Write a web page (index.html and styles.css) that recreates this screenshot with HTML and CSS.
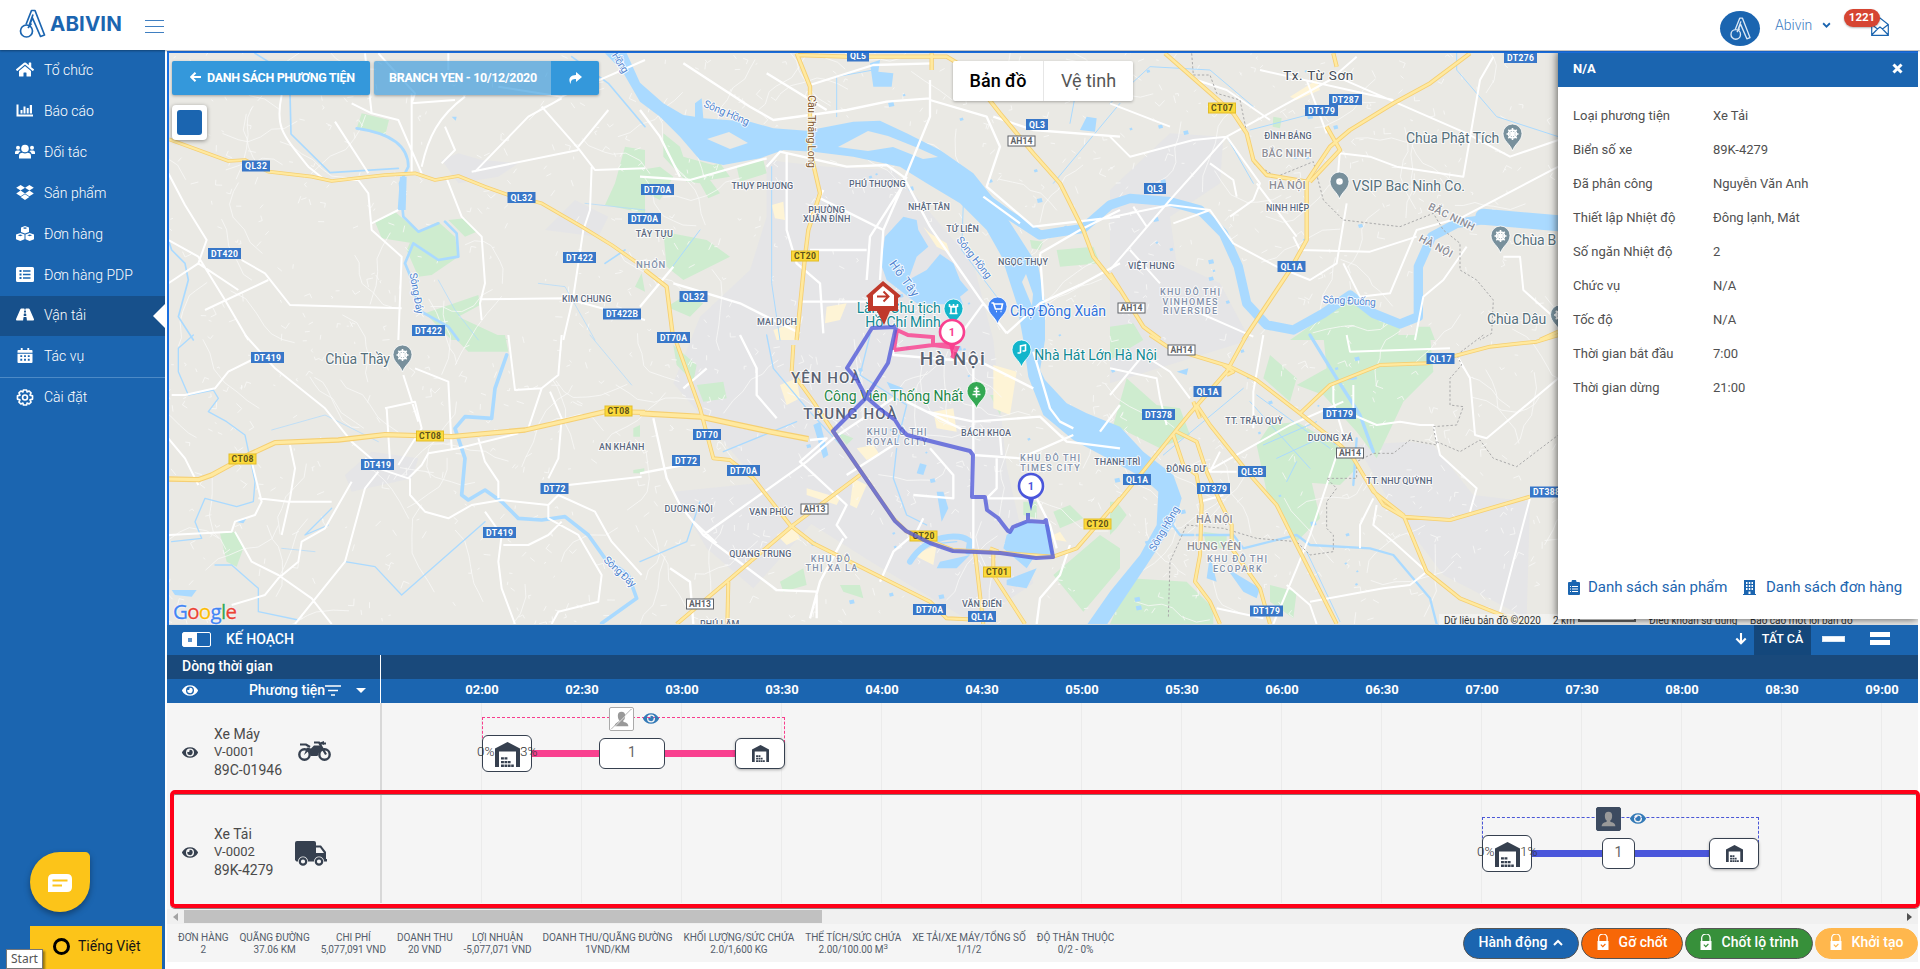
FILE: index.html
```html
<!DOCTYPE html>
<html lang="vi">
<head>
<meta charset="utf-8">
<title>Abivin - Vận tải</title>
<link rel="stylesheet" href="styles.css">
</head>
<body>
<svg class="defs" aria-hidden="true">
  <symbol id="eye" viewBox="0 64 576 384"><path d="M572.52 241.4C518.29 135.59 410.93 64 288 64S57.68 135.64 3.48 241.41a32.35 32.35 0 0 0 0 29.19C57.71 376.41 165.07 448 288 448s230.32-71.64 284.52-177.41a32.35 32.35 0 0 0 0-29.19zM288 400a144 144 0 1 1 144-144 143.93 143.93 0 0 1-144 144zm0-240a95.31 95.31 0 0 0-25.31 3.79 47.85 47.85 0 0 1-66.9 66.9A95.78 95.78 0 1 0 288 160z"/></symbol>
  <symbol id="warehouse" viewBox="0 0 25 25"><path d="M0 6.500 12.500 0 25 6.500V25h-4V9.500H4V25H0z"/><path d="M6 15.200h2.900v2.300H6zM9.500 15.200h2.900v2.300H9.500zM6 18.900h2.900v2.300H6zM9.500 18.900h2.900v2.300H9.500zM13 18.900h2.600v2.300H13zM6 22.500h2.900V25H6zM9.500 22.500h2.900V25H9.500zM13 22.500h2.600V25H13zM16.200 22.500h2.600V25h-2.600z"/></symbol>
  <symbol id="lock" viewBox="0 0 12 16"><path d="M1.700 7.500V4.700a4.200 4.200 0 0 1 8.400-1V7" fill="none" stroke="currentColor" stroke-width="1.300"/><path fill="currentColor" fill-rule="evenodd" d="M.5 7h11v9H.500zM3.400 11l2.400 2.400 3-3-.8-.8-2.200 2.200-1.600-1.600z"/></symbol>
  <symbol id="logo" viewBox="0 0 26 29"><g fill="none" stroke="currentColor" stroke-width="1.700" stroke-linejoin="round"><circle cx="7" cy="22" r="6"/><path d="M6.500 15.500 12 1.500h3.500L25 26l-4 1.500L13 9 9.500 17M13.500 5.500l-3.500 10M12 14.500 8.500 19"/></g></symbol>
</svg>

<header class="topbar">
  <div class="brand"><svg class="brand-mark"><use href="#logo"/></svg><span>ABIVIN</span></div>
  <div class="burger"><i></i><i></i><i></i></div>
  <div class="account">
    <span class="avatar"><svg width="23" height="23"><use href="#logo"/></svg></span>
    <span class="user">Abivin</span>
    <svg class="chev" viewBox="0 0 8 6"><path d="M1 1l3 3 3-3" fill="none" stroke="#1b65b0" stroke-width="1.600"/></svg>
    <span class="mail"><svg width="18" height="19" viewBox="0 0 18 19"><path d="M.7 7.500 9 1l8.300 6.500V18.300H.7zM.7 7.500 6.500 12 9 10l2.500 2 5.800-4.500M6.500 12 .7 18M11.500 12l5.800 6" fill="none" stroke="#1b65b0" stroke-width="1.200"/></svg><b>1221</b></span>
  </div>
</header>

<div class="shell">
<nav class="side">
  <a><svg viewBox="0 32 576 448"><path d="M280.37 148.26L96 300.11V464a16 16 0 0 0 16 16l112.06-.29a16 16 0 0 0 15.92-16V368a16 16 0 0 1 16-16h64a16 16 0 0 1 16 16v95.64a16 16 0 0 0 16 16.05L464 480a16 16 0 0 0 16-16V300L295.67 148.26a12.19 12.19 0 0 0-15.3 0zM571.6 251.47L488 182.56V44.05a12 12 0 0 0-12-12h-56a12 12 0 0 0-12 12v72.61L318.47 43a48 48 0 0 0-61 0L4.34 251.47a12 12 0 0 0-1.6 16.9l25.5 31A12 12 0 0 0 45.15 301l235.22-193.74a12.19 12.19 0 0 1 15.3 0L530.9 301a12 12 0 0 0 16.9-1.6l25.5-31a12 12 0 0 0-1.7-16.93z"/></svg>Tổ chức</a>
  <a><svg viewBox="0 0 18 14"><path d="M.5 1h2v10H17v2H.5zM4.500 6.500h2V10h-2zM7.500 3h2v7h-2zM10.700 4.500h2V10h-2zM13.800 1.500h2.200V10h-2.200z"/></svg>Báo cáo</a>
  <a><svg viewBox="0 0 20 14" class="wide"><circle cx="10" cy="4" r="3.800"/><circle cx="3" cy="3.200" r="2"/><circle cx="17" cy="3.200" r="2"/><path d="M4 14v-2.500C4 9.500 5.500 8.300 7.500 8.300c1.500.8 3.500.8 5 0 2 0 3.500 1.200 3.500 3.200V14zM0 9.500V8c0-1.200.8-2 2-2h2c.8 0 1.300.3 1.700.8C4.300 7.500 3.500 8.400 3.300 9.500zM20 9.500V8c0-1.200-.8-2-2-2h-2c-.8 0-1.300.3-1.700.8 1.400.7 2.200 1.600 2.400 2.700z"/></svg>Đối tác</a>
  <a><svg viewBox="0 0 528 450"><path d="M264.400 84.300l-132 84.300 132 84.300-132 84.300L0 252.100l132.300-84.300L0 84.300 132.300 0l132.100 84.300zM131.600 363.700l132-84.300 132 84.300-132 84.300-132-84.300zm132.800-111.600l132-84.300-132-83.600L395.700 0 528 84.300l-132.300 84.300L528 252.800l-132.300 84.300-131.300-85z"/></svg>Sản phẩm</a>
  <a><svg viewBox="0 0 18 15"><path fill-rule="evenodd" d="M9 0l4 1.500V6L9 7.600 5 6V1.500zM9 1.300 6.800 2.100 9 3l2.200-.9zM4.300 7l4.200 1.600v4.600L4.300 15 0 13.200V8.600zM4.300 8.400 1.900 9.300l2.400.9 2.400-.9zM13.700 7 18 8.600v4.600L13.700 15l-4.200-1.800V8.600zM13.700 8.400l-2.400.9 2.400.9 2.400-.9z"/></svg>Đơn hàng</a>
  <a><svg viewBox="0 0 18 15"><path fill-rule="evenodd" d="M1.500 0h15Q18 0 18 1.500v12Q18 15 16.500 15h-15Q0 15 0 13.500v-12Q0 0 1.500 0zM3.500 3v2h2V3zM7 3.300v1.400h7.500V3.300zM3.500 6.500v2h2v-2zM7 6.800v1.400h7.500V6.800zM3.500 10v2h2v-2zM7 10.300v1.400h7.500v-1.400z"/></svg>Đơn hàng PDP</a>
  <a class="on"><svg viewBox="0 64 576 384"><path d="M573.19 402.67l-139.79-320C428.43 71.29 417.6 64 405.68 64h-97.59l2.45 23.16c.5 4.72-3.21 8.84-7.96 8.84h-29.16c-4.75 0-8.46-4.12-7.96-8.84L267.91 64h-97.59c-11.93 0-22.76 7.29-27.73 18.67L2.8 402.67C-6.45 423.86 8.31 448 30.54 448h196.84l10.31-97.68c.86-8.14 7.72-14.32 15.91-14.32h68.8c8.19 0 15.05 6.18 15.91 14.32L348.62 448h196.84c22.23 0 36.99-24.14 27.73-45.33zM260.4 135.16a8 8 0 0 1 7.96-7.16h39.29c4.09 0 7.53 3.09 7.96 7.16l4.6 43.58c.75 7.09-4.81 13.26-11.93 13.26h-40.54c-7.13 0-12.68-6.17-11.93-13.26l4.59-43.58zM315.64 304h-55.29c-9.5 0-16.91-8.23-15.91-17.68l5.07-48c.86-8.14 7.72-14.32 15.91-14.32h45.15c8.19 0 15.05 6.18 15.91 14.32l5.07 48c1 9.45-6.41 17.68-15.91 17.68z"/></svg>Vận tải</a>
  <a><svg viewBox="0 0 16 16"><path fill-rule="evenodd" d="M3.500 0h2v2h5V0h2v2H15q1 0 1 1v2H0V3q0-1 1-1h2.500zM0 6h16v9q0 1-1 1H1q-1 0-1-1zM3 7.700v2h2v-2zM7 7.700v2h2v-2zM11 7.700v2h2v-2zM3 11.500v2h2v-2zM7 11.500v2h2v-2zM11 11.500v2h2v-2z"/></svg>Tác vụ</a>
  <a class="ruled"><svg viewBox="0 0 18 18"><g fill="none" stroke="#fff" stroke-width="1.700" stroke-linejoin="round"><path d="M7.300 1h3.400l.5 2.200 2.200-1.100 2 2-1.100 2.400L17 7.300v3.400l-2.700.8 1.100 2.400-2 2-2.200-1.100-.5 2.200H7.300l-.5-2.200-2.200 1.100-2-2 1.100-2.400L1 10.700V7.300l2.700-.8-1.100-2.400 2-2 2.200 1.100z"/><circle cx="9" cy="9" r="2.600"/></g></svg>Cài đặt</a>
  <div class="side-foot">
    <div class="chat"><svg width="24" height="18" viewBox="0 0 24 18"><path fill="#fff" d="M5 0h14q5 0 5 5v8q0 5-5 5H0V5q0-5 5-5z"/><path d="M4.500 6.500h15M4.500 11.500h9.500" stroke="#fcc419" stroke-width="2"/></svg></div>
    <div class="lang"><i></i>Tiếng Việt</div>
    <div class="tip">Start</div>
  </div>
</nav>

<main class="main">
  <section class="mapbox">
    <svg id="map" viewBox="169 53 1749 571" preserveAspectRatio="xMinYMin slice"></svg>
    <div class="attrib"><span class="a1">Dữ liệu bản đồ ©2020</span><span class="a2">2 km</span><i></i><span class="a3">Điều khoản sử dụng</span><span class="a4">Báo cáo một lỗi bản đồ</span></div>
    <div class="google"><b>G</b><b>o</b><b>o</b><b>g</b><b>l</b><b>e</b></div>
    <div class="mapbtns">
      <button class="mb"><svg width="11" height="10" viewBox="0 0 11 10"><path d="M5.500.8 1.200 5l4.300 4.200M1.500 5H11" fill="none" stroke="#fff" stroke-width="2"/></svg>DANH SÁCH PHƯƠNG TIỆN</button>
      <div class="pair"><button class="mb dim">BRANCH YEN - 10/12/2020</button><button class="mb share"><svg width="14" height="12" viewBox="0 0 14 12"><path fill="#fff" d="M8 0l6 5-6 5V7C4.500 7 2.500 8 2.800 12 .8 9.500-.2 3.500 8 3z"/></svg></button></div>
    </div>
    <div class="swatch"><i></i></div>
    <div class="types"><span class="sel">Bản đồ</span><span>Vệ tinh</span></div>
    <aside class="info">
      <div class="info-head"><b>N/A</b><svg width="11" height="11" viewBox="0 0 11 11"><path d="M1.500 1.500l8 8M9.500 1.500l-8 8" stroke="#fff" stroke-width="3"/></svg></div>
      <dl>
        <dt>Loại phương tiện</dt><dd>Xe Tải</dd>
        <dt>Biển số xe</dt><dd>89K-4279</dd>
        <dt>Đã phân công</dt><dd>Nguyễn Văn Anh</dd>
        <dt>Thiết lập Nhiệt độ</dt><dd>Đông lạnh, Mát</dd>
        <dt>Số ngăn Nhiệt độ</dt><dd>2</dd>
        <dt>Chức vụ</dt><dd>N/A</dd>
        <dt>Tốc độ</dt><dd>N/A</dd>
        <dt>Thời gian bắt đầu</dt><dd>7:00</dd>
        <dt>Thời gian dừng</dt><dd>21:00</dd>
      </dl>
      <div class="links">
        <a><svg width="12" height="15" viewBox="0 0 12 15"><path fill="#1b65b0" fill-rule="evenodd" d="M1 2h2.500a2.500 2.500 0 0 1 5 0H11q1 0 1 1v11q0 1-1 1H1q-1 0-1-1V3q0-1 1-1zM2 6v1h1V6zM4 6v1h6V6zM2 8.500v1h1v-1zM4 8.500v1h6v-1zM2 11v1h1v-1zM4 11v1h6v-1z"/></svg>Danh sách sản phẩm</a>
        <a><svg width="13" height="15" viewBox="0 0 13 15"><path fill="#1b65b0" fill-rule="evenodd" d="M1 0h11v14h1v1H0v-1h1zM3 2v2h1.500V2zM5.800 2v2h1.500V2zM8.500 2v2H10V2zM3 5v2h1.500V5zM5.800 5v2h1.500V5zM8.500 5v2H10V5zM3 8v2h1.500V8zM5.800 8v2h1.500V8zM8.500 8v2H10V8zM5.500 11.500V14h2v-2.500z"/></svg>Danh sách đơn hàng</a>
      </div>
    </aside>
  </section>

  <section class="plan">
    <div class="plan-head">
      <span class="toggle"><i></i></span><span class="plan-title">KẾ HOẠCH</span>
      <svg class="down" width="12" height="12" viewBox="0 0 12 12"><path d="M6 0v10M1.300 5.500 6 10.200l4.700-4.700" fill="none" stroke="#fff" stroke-width="2.100"/></svg>
      <span class="all">TẤT CẢ</span><i class="one"></i><span class="two"><i></i><i></i></span>
    </div>
    <div class="scale-top"><div class="col">Dòng thời gian</div></div>
    <div class="scale">
      <div class="col"><svg class="ey"><use href="#eye"/></svg><span>Phương tiện</span><svg width="16" height="11" viewBox="0 0 16 11"><path d="M0 1h16M3 5.500h10M6 10h4" stroke="#fff" stroke-width="1.600"/></svg><i class="caret"></i></div>
      <div class="hours"><span>02:00</span><span>02:30</span><span>03:00</span><span>03:30</span><span>04:00</span><span>04:30</span><span>05:00</span><span>05:30</span><span>06:00</span><span>06:30</span><span>07:00</span><span>07:30</span><span>08:00</span><span>08:30</span><span>09:00</span></div>
    </div>
    <div class="rows">
      <div class="row">
        <div class="col"><svg class="ey"><use href="#eye"/></svg><p>Xe Máy<small>V-0001</small>89C-01946</p>
          <svg class="veh moto" width="33" height="20" viewBox="0 0 33 20"><g fill="none" stroke="#36404f"><circle cx="6.500" cy="13.500" r="5.200" stroke-width="2.400"/><circle cx="26.500" cy="13.500" r="5.200" stroke-width="2.400"/><path d="M2 3.500h6l4 2.500M16 1.500h5l7 12M22 2.500h6" stroke-width="2.200"/></g><path fill="#36404f" d="M9 6.500l4 1 3-3h6l3 4-4 3-1.500 3.500H12.500L11 9.500 6 14zM22 1.500l4-1.500v4z"/></svg></div>
        <div class="track">
          <div class="trip pink" style="left:100px;width:303px"></div>
          <div class="bar pinkbar" style="left:150px;width:210px"></div>
          <div class="stop big" style="left:100px;width:50px"><svg width="25" height="25"><use href="#warehouse"/></svg></div>
          <span class="pct" style="left:95px">0%</span><span class="pct" style="left:138px">3%</span>
          <div class="stop" style="left:217px;width:66px">1</div>
          <div class="stop soft" style="left:353px;width:50px"><svg width="17" height="17"><use href="#warehouse"/></svg></div>
          <div class="driver none" style="left:227px"><svg viewBox="0 0 24 24"><path fill="#999" d="M12 4q4 0 4 4.500t-2.500 5.500l1 1.300q5 .7 5 4.700h-15q0-4 5-4.700l1-1.300Q8 13 8 8.500T12 4z"/><path d="M1 23 23 1" stroke="#999"/><path d="M2 23 23 2" stroke="#fff" stroke-width=".8"/></svg></div>
          <svg class="ey see" style="left:261px"><use href="#eye"/></svg>
        </div>
      </div>
      <div class="row">
        <div class="col"><svg class="ey"><use href="#eye"/></svg><p>Xe Tải<small>V-0002</small>89K-4279</p>
          <svg class="veh truck" width="32" height="25" viewBox="0 0 32 25"><path fill="#36404f" fill-rule="evenodd" d="M2 0h17q2 0 2 2v2.500h5l5 6.500V18h1v2.500H1.500L0 19V2Q0 0 2 0zM21 6.500V12h8l-4-5.500z"/><circle cx="8" cy="20.500" r="5" fill="#f5f5f5"/><circle cx="24" cy="20.500" r="5" fill="#f5f5f5"/><circle cx="8" cy="20.500" r="3.200" fill="none" stroke="#36404f" stroke-width="2.200"/><circle cx="24" cy="20.500" r="3.200" fill="none" stroke="#36404f" stroke-width="2.200"/></svg></div>
        <div class="track">
          <div class="trip blue" style="left:1100px;width:277px"></div>
          <div class="bar bluebar" style="left:1150px;width:182px"></div>
          <div class="stop big" style="left:1100px;width:50px"><svg width="25" height="25"><use href="#warehouse"/></svg></div>
          <span class="pct" style="left:1095px">0%</span><span class="pct" style="left:1138px">1%</span>
          <div class="stop" style="left:1220px;width:33px">1</div>
          <div class="stop soft" style="left:1327px;width:50px"><svg width="17" height="17"><use href="#warehouse"/></svg></div>
          <div class="driver has" style="left:1214px"><svg viewBox="0 0 24 24"><path fill="#999" d="M12 4q4 0 4 4.500t-2.500 5.500l1 1.300q5 .7 5 4.700h-15q0-4 5-4.700l1-1.300Q8 13 8 8.500T12 4z"/></svg></div>
          <svg class="ey see" style="left:1248px"><use href="#eye"/></svg>
        </div>
      </div>
      <div class="highlight"></div>
    </div>
    <div class="hscroll"><i class="la"></i><i class="thumb"></i><i class="ra"></i></div>
    <footer class="foot">
      <div class="stats">
        <div>ĐƠN HÀNG<br>2</div><div>QUÃNG ĐƯỜNG<br>37.06 KM</div><div>CHI PHÍ<br>5,077,091 VND</div><div>DOANH THU<br>20 VND</div><div>LỢI NHUẬN<br>-5,077,071 VND</div><div>DOANH THU/QUÃNG ĐƯỜNG<br>1VND/KM</div><div>KHỐI LƯỢNG/SỨC CHỨA<br>2.0/1,600 KG</div><div>THỂ TÍCH/SỨC CHỨA<br>2.00/100.00 M<sup>3</sup></div><div>XE TẢI/XE MÁY/TỔNG SỐ<br>1/1/2</div><div>ĐỘ THÂN THUỘC<br>0/2 - 0%</div>
      </div>
      <div class="acts">
        <button class="c1">Hành động<svg width="10" height="7" viewBox="0 0 10 7"><path d="M1 6l4-4 4 4" fill="none" stroke="#fff" stroke-width="2"/></svg></button>
        <button class="c2"><svg width="12" height="16"><use href="#lock"/></svg>Gỡ chốt</button>
        <button class="c3"><svg width="12" height="16"><use href="#lock"/></svg>Chốt lộ trình</button>
        <button class="c4"><svg width="12" height="16"><use href="#lock"/></svg>Khởi tạo</button>
      </div>
    </footer>
  </section>
</main>
</div>
<script src="map.js"></script>
</body>
</html>
```
FILE: styles.css
```css
*{box-sizing:border-box}
body{margin:0;width:1920px;height:969px;overflow:hidden;background:#fff;font-family:Roboto,"Liberation Sans",sans-serif;color:#444;display:flex;flex-direction:column}
button{font-family:inherit;border:0;margin:0;padding:0}
.defs{position:absolute;width:0;height:0}
svg{display:block;flex:none}

.topbar{height:50px;flex:none;display:flex;align-items:center;background:#fff;position:relative;z-index:5;box-shadow:0 1px 2px rgba(0,0,0,.35);color:#1b65b0}
.brand{display:flex;align-items:center;margin-left:19px;width:104px;gap:4px}
.brand-mark{width:27px;height:29px;margin-top:-3px}
.brand span{font:700 20.500px/24px Inter,sans-serif;letter-spacing:.1px;margin-top:-2px}
.burger{margin-left:22px;display:flex;flex-direction:column;gap:5px;width:19px;margin-top:3px}
.burger i{height:1px;background:#3f7fc1}
.account{margin-left:auto;display:flex;align-items:center;width:200px;height:50px}
.avatar{width:40px;height:35px;border-radius:50%;background:#1b65b0;color:#dbe8f5;display:flex;align-items:center;justify-content:center;margin-top:7px}
.user{font-size:14px;font-weight:300;margin-left:15px;width:47px;color:#3b7bbf}
.chev{width:9px;height:7px}
.mail{position:relative;margin-left:40px;margin-top:3px}
.mail b{position:absolute;left:-27px;top:-8px;width:36px;height:18px;border-radius:9px;background:#d64532;color:#fff;font-size:11.500px;line-height:17px;text-align:center;box-shadow:0 1px 2px rgba(0,0,0,.3)}

.shell{display:flex;flex:1;min-height:0}
.side{width:165px;background:#1b65b0;display:flex;flex-direction:column;position:relative}
.side a{height:41px;display:flex;align-items:center;font-size:14px;font-weight:300;color:#fff;padding:0 0 2px 16px;flex:none}
.side a svg{width:18px;height:15px;margin-right:10px;fill:#fff}
.side a svg.wide{width:20px;margin:0 9px 0 -1px}
.side a.on{height:40px;background:#17508b;position:relative;padding-bottom:3px}
.side a.on:after{content:"";position:absolute;right:0;top:8px;border:12px solid transparent;border-right-color:#fff;border-left:0}
.side a.ruled{border-top:1px solid #4d8ac6}
.side a.ruled svg{height:17px}
.side-foot{margin-top:auto;height:117px;display:flex;flex-direction:column;justify-content:space-between;align-items:flex-start;padding-left:30px;position:relative}
.chat{width:60px;height:60px;border-radius:50% 8% 50% 50%;background:#fcc419;box-shadow:0 3px 6px rgba(0,0,0,.35);display:flex;align-items:center;justify-content:center;padding-top:2px}
.lang{width:132px;height:43px;background:#fcc419;color:#151515;font-size:14px;display:flex;align-items:center;padding-left:23px;padding-bottom:3px;gap:8px}
.lang i{width:17px;height:17px;border:3px solid #000;border-radius:50%}
.tip{position:absolute;left:6px;bottom:0;width:37px;height:20px;background:#fff;border:1px solid #777;font:12px/18px "Noto Sans",sans-serif;color:#555;text-align:center;box-shadow:2px 2px 2px rgba(0,0,0,.4)}

.main{flex:1;margin:1px 2px 0 2px;display:flex;flex-direction:column;min-width:0}
.mapbox{height:574px;flex:none;position:relative;border:2px solid #1a6fe0;border-width:2px 0 0 2px;overflow:hidden;background:#eae9e4;box-shadow:inset 0 -1px #ddd}
#map{width:1749px;height:571px}
.mapbtns{position:absolute;left:3px;top:8px;display:flex;gap:4px}
.mb{height:34px;padding:0 15px 2px 18px;background:#3498db;color:#fff;font-weight:700;font-size:12.500px;letter-spacing:-.36px;display:flex;align-items:center;gap:6px;border-radius:2px;box-shadow:0 1px 3px rgba(0,0,0,.3);width:198px;white-space:nowrap}
.pair{display:flex;box-shadow:0 1px 3px rgba(0,0,0,.3);border-radius:2px}
.mb.dim{width:177px;background:rgba(52,152,219,.65);padding:0 0 2px 15px;letter-spacing:-.3px;box-shadow:none;border-radius:2px 0 0 2px}
.mb.share{width:48px;padding:0;justify-content:center;box-shadow:none;border-radius:0 2px 2px 0}
.swatch{position:absolute;left:3px;top:52px;width:35px;height:35px;background:#fff;border-radius:4px;box-shadow:0 1px 4px rgba(0,0,0,.4);padding:5px}
.swatch i{display:block;height:25px;background:#1b65b0;border-radius:3px}
.types{position:absolute;left:784px;top:8px;display:flex;height:40px;width:180px;background:#fff;box-shadow:0 1px 3px rgba(0,0,0,.3);border-radius:2px;font-size:18px;line-height:39px;color:#565656}
.types span{flex:1;text-align:center}
.types .sel{flex:0 0 91px;color:#000;font-weight:500;font-size:18px;border-right:1px solid #e6e6e6}
.google{position:absolute;left:4px;top:546px;font:500 20.500px/25px "Open Sans",Lato,sans-serif;letter-spacing:-.7px;-webkit-text-stroke:.3px;text-shadow:0 0 2px #fff,0 0 2px #fff;display:flex}
.google b{font-weight:500;color:#4285f4}
.google b:nth-child(2),.google b:nth-child(6){color:#ea4335}
.google b:nth-child(3){color:#fbbc05}
.google b:nth-child(5){color:#34a853}
.attrib{position:absolute;left:1270px;right:0;top:561px;height:14px;background:rgba(245,245,245,.7);font-size:10px;line-height:13px;color:#333;display:flex;white-space:nowrap;padding-left:5px}
.attrib .a1{width:109px}.attrib .a2{width:25px}
.attrib i{width:58px;height:8px;border:2px solid #666;border-top:0;margin-right:13px}
.attrib .a3{width:101px}
.info{position:absolute;left:1389px;top:-2px;width:360px;height:568px;background:#fff;box-shadow:0 0 9px rgba(0,0,0,.7);display:flex;flex-direction:column}
.info-head{height:36px;background:#1b65b0;display:flex;align-items:center;justify-content:space-between;padding:0 15px 1px;color:#fff;font-size:13px}
.info dl{margin:11px 0 0 15px;display:grid;grid-template-columns:140px 1fr;grid-auto-rows:34px;align-items:center;font-size:13px;color:#505050}
.info dd{margin:0}
.links{margin-top:auto;height:48px;display:flex;padding-left:10px;color:#1b65b0;font-size:15px}
.links a{display:flex;align-items:center;height:32px;gap:8px;white-space:nowrap;width:176px;letter-spacing:-.03px}
.links a+a{gap:10px}

.plan{flex:1;display:flex;flex-direction:column;background:#f5f5f5;margin-bottom:7px}
.plan-head{height:30px;background:#1b65b0;color:#fff;display:flex;align-items:center;padding:0 0 2px 15px}
.toggle{width:29px;height:15px;border:1px solid #fff;border-radius:2px;margin-right:15px}
.toggle i{display:block;width:14px;height:13px;background:#fff;position:relative}
.toggle i:after{content:"";position:absolute;left:5px;top:5px;width:4px;height:4px;background:#5d92c9}
.plan-title{font-size:14px;font-weight:500}
.down{margin-left:auto;margin-right:7px}
.all{background:#14477b;width:57px;height:30px;margin-bottom:-2px;font-size:12.500px;font-weight:500;line-height:28px;text-align:center}
.one{width:23px;height:6px;background:#fff;border:1px solid #dbe8f5;margin-left:11px}
.two{margin-left:25px;width:20px;margin-right:28px}
.two i{display:block;height:5px;background:#fff;margin:2px 0 3px}
.col{width:214px;flex:none;display:flex;align-items:center;padding-left:15px}
.scale-top{height:24px;background:#19497b;color:#fff;font-size:14px;font-weight:500;display:flex}
.scale-top .col,.scale .col{border-right:1px solid #fff;padding-bottom:2px}
.scale{height:24px;background:#1b65b0;color:#fff;display:flex;font-size:14px;font-weight:500}
.scale .col span{margin-left:auto}
.ey{width:16px;height:11px;fill:#36404f}
.scale .ey{fill:#fff}
.row .col>.ey{margin-top:-2px}
.caret{border:5px solid transparent;border-top-color:#fff;border-bottom:0;margin:0 14px 0 15px}
.hours{display:flex;margin-left:51px;width:1486px;overflow:hidden;line-height:22px;font-size:13px;font-weight:700}
.hours span{width:100px;text-align:center;flex:none}
.rows{height:200px;position:relative}
.row{height:100px;display:flex;background:#f5f5f5}
.row .col{border-right:2px solid #d8d8d8;width:215px}
.row p{margin:-2px 0 0 16px;width:84px;font-size:14px;line-height:18px;color:#4a4a4a}
.row p small{display:block;font-size:13px}
.moto{margin-top:-5px}
.truck{margin:1px 0 0 -3px}
.track{flex:1;position:relative;overflow:hidden;background:repeating-linear-gradient(90deg,transparent 0 99px,#ebebeb 99px 100px)}
.trip{position:absolute;top:14px;height:26px;border:1px dashed #f83e8c;border-bottom:0}
.trip.blue{border-color:#4a56d6}
.bar{position:absolute;top:47px;height:7px;background:#f9408f}
.bluebar{background:#4a56db}
.stop{position:absolute;top:35px;height:31px;border:1px solid #36404f;border-radius:6px;background:#fff;display:flex;align-items:center;justify-content:center;font-size:14px;color:#666;padding-bottom:4px}
.stop svg{fill:#36404f;color:#36404f;margin-top:3px}
.stop.big{top:32px;height:37px;padding-bottom:2px}
.stop.soft{box-shadow:0 1px 3px rgba(0,0,0,.3)}
.pct{position:absolute;top:40px;font-size:13.500px;font-weight:300;color:#333;line-height:16px}
.driver{position:absolute;top:4px;width:25px;height:24px;border-radius:2px}
.driver svg{width:100%;height:100%}
.driver.none{background:#fff;border:1px solid #aaa}
.driver.has{background:#3d4b60;border:1px solid #3d4b60}
.ey.see{position:absolute;top:10px;fill:#337ab7}
.highlight{position:absolute;left:3px;top:87px;width:1750px;height:118px;border:4px solid #ff0018;border-radius:5px;box-shadow:0 1px 0 #8a7a7a,inset 0 1px 0 #8a7a7a}
.hscroll{height:15px;margin-top:6px;background:#f0f0f0;display:flex;align-items:center;justify-content:space-between}
.thumb{width:638px;height:13px;background:#c1c1c1;margin-right:auto;margin-left:6px}
.la,.ra{border:4px solid transparent}
.la{border-right:5px solid #a3a3a3;border-left:0;margin-left:6px}
.ra{border-left:5px solid #505050;border-right:0;margin-right:6px}
.foot{height:37px;display:flex;justify-content:space-between;align-items:flex-start}
.stats{display:flex;gap:11px;margin:8px 0 0 11px;font-size:10px;letter-spacing:-.045px;line-height:12px;color:#545d6b;text-align:center;white-space:nowrap}
.stats sup{font-size:8px;line-height:0}
.acts{display:flex;gap:2px;margin-top:4px}
.acts button{height:31px;border-radius:16px;color:#fff;font-size:14px;font-weight:500;display:flex;align-items:center;justify-content:center;border:1px solid #555;padding-bottom:3px;white-space:nowrap}
.acts .c1{width:116px;background:#1b65b0;gap:6px}
.acts .c2{width:102px;background:#f76707}
.acts .c3{width:128px;background:#37903a}
.acts .c4{width:103px;background:#ffb74d;border-color:#ffb74d}
.acts .c2,.acts .c3,.acts .c4{gap:10px}

#map .green{fill:#ceeccf}
#map .urban{fill:#e5e5e7}
#map .lake{fill:#aadaff}
#map .river{fill:none;stroke:#aadaff;stroke-linejoin:round;stroke-linecap:round}
#map .street{fill:none;stroke:#fff;stroke-linejoin:round}
#map .casing{fill:none;stroke:#f5cf73;stroke-linejoin:round}
#map .hwy{fill:none;stroke:#ffe99f;stroke-linejoin:round}
#map .border{fill:none;stroke:#aaa;stroke-width:3;stroke-dasharray:7 6}
#map .minor{fill:none;stroke:#f9f9f7;stroke-width:.8}
#map .beige{fill:#fef4d6}
#map text{font-family:Roboto,"Liberation Sans",sans-serif;text-anchor:middle;paint-order:stroke;stroke:#fff;stroke-width:2px;stroke-opacity:.85;stroke-linejoin:round}
#map .t{fill:#5b6980;font-weight:500}
#map .k{fill:#8291aa;font-weight:500}
#map .d{fill:#5a6372;font-weight:500}
#map .p{fill:#8e8f98;font-weight:500}
#map .poi{fill:#56707c}
#map .town{fill:#444b55}
#map .w{fill:#4f83cf}
#map .teal{fill:#128a94}
#map .shop{fill:#3273dc}
#map .park{fill:#1f8746}
#map .br{fill:#80562d}
#map .sh text{stroke:none;font-weight:700}
```
FILE: map.js
```js
(function () {
  var NS = 'http://www.w3.org/2000/svg', map = document.getElementById('map');
  var tiles = { A: [165, 50], B: [640, 50], C: [1110, 50], D: [165, 335], E: [640, 335], F: [1110, 335] };
  function add(tag, attrs, text, parent) {
    var e = document.createElementNS(NS, tag);
    for (var k in attrs) e.setAttribute(k, attrs[k]);
    if (text) e.textContent = text;
    (parent || map).appendChild(e);
    return e;
  }
  function shape(tile, cls, d, w) {
    var o = tiles[tile], a = { d: d, 'class': cls, transform: 'translate(' + o[0] + ' ' + o[1] + ') scale(.33333)' };
    if (w) a['stroke-width'] = w;
    return add('path', a);
  }

  // Built-up areas
  [['B', 'M380 330L560 350 760 360 830 440 1000 640 1060 870 1100 1250 1180 1600 1000 1720 700 1540 400 1350 100 1000 180 800 330 660 380 500z'],
   ['C', 'M0 420L180 250 340 260 330 400 180 500 200 640 330 700 420 870 0 1000z'],
   ['F', 'M740 330L900 320 970 330 1090 480 1260 500 1250 850 1000 720 850 520z'],
   ['A', 'M830 330L880 310 950 330 1060 340 1000 380 880 400zM1140 540L1300 560 1330 500 1230 450z'],
   ['E', 'M100 470L400 440 520 560 340 760 200 640z'], ['D', 'M540 420L620 350 760 370 740 430 560 470z']
  ].forEach(function (s) { shape(s[0], 'urban', s[1]); });

  // Parks and fields
  [['A', 'M590 190L672 210 660 258 575 235zM630 515L690 485 760 545 820 515 870 560 880 620 800 675 760 680 725 600 735 578 650 565zM850 510L900 505 935 545 900 560zM1380 290L1440 300 1440 490 1320 465 1350 400zM1430 670L1440 725 1410 710zM780 790L940 735 945 765 880 800 1030 870 860 870z'],
   ['B', 'M70 250L120 290 130 320 220 345 240 340 270 380 210 390 240 430 205 445 180 400 140 395 70 320zM0 360L60 350 100 380 60 450 0 420zM290 350L370 330 380 370 300 395zM70 545L200 570 270 620 130 690 80 650zM1170 570L1210 575 1200 600 1175 595zM1250 600L1360 590 1380 640 1260 650zM80 770L130 740 190 760 150 800z'],
   ['C', 'M490 200L515 205 510 235 488 230zM540 870L640 800 720 750 790 790 870 835 860 870zM920 830L960 830 975 870 910 870zM0 830L70 820 100 870 0 930z'],
   ['D', 'M860 0L1020 0 1030 50 910 50zM165 595L215 590 235 640 215 695 185 680zM1405 280L1425 270 1425 305 1405 305zM1405 405L1438 400 1438 415 1405 415z'],
   ['E', 'M100 30L170 90 160 140 110 90zM170 150L250 140 260 190 190 200zM590 290L640 310 620 330zM1050 180L1090 180 1080 240zM1240 530L1290 510 1330 550 1260 580zM1150 500L1190 500 1190 550 1150 540zM1240 720L1380 600 1440 640 1440 700 1330 830zM600 750L660 750 670 790 610 770zM420 740L490 700 500 750 430 770z'],
   ['F', 'M50 130L140 210 210 220 240 300 150 340 10 270zM480 60L560 130 540 200 460 130zM640 0L960 0 970 110 880 200 800 370 740 290 640 180 560 150 650 100zM560 260L730 360 740 400 690 450 560 440 460 400 440 330 480 270zM440 330L600 420 630 550 560 620 470 470zM0 500L20 500 50 540 20 580 0 600zM60 730L230 740 310 820 310 867 0 867zM480 750L560 770 550 850 480 800zM280 590L350 600 350 640 290 640z']
  ].forEach(function (s) { shape(s[0], 'green', s[1]); });

  // Public buildings blocks
  shape('B', 'beige', 'M395 465L430 455 435 510 405 505zM850 530L890 590 930 610 920 580 870 550zM560 770L620 760 600 810 555 820zM400 840L460 820 480 870 410 870z');
  shape('E', 'beige', 'M420 150L470 130 480 190 440 210zM1060 90L1130 110 1110 240 1060 220zM500 460L600 490 590 510 500 480zM640 430L680 450 650 520 630 510zM880 230L940 220 950 290 890 280zM820 660L890 630 880 690zM410 600L460 570 480 610 440 630zM650 340L700 330 720 360 680 375zM1220 610L1260 590 1280 620z');
  shape('C', 'beige', 'M540 140L620 90 630 120 560 150z');

  // Seeded scatter of short residential streets
  var seed = 7;
  function rnd() { seed = (seed * 16807) % 2147483647; return seed / 2147483647; }
  var d = '';
  for (var i = 0; i < 1300; i++) {
    var x = 170 + rnd() * 1390, y = 53 + rnd() * 571, a = rnd() * 6.28, l = 2 + rnd() * 6;
    d += 'M' + x.toFixed(1) + ' ' + y.toFixed(1) + 'l' + (Math.cos(a) * l).toFixed(1) + ' ' + (Math.sin(a) * l).toFixed(1);
    if (rnd() > .65) d += 'l' + (-Math.sin(a) * l * .8).toFixed(1) + ' ' + (Math.cos(a) * l * .8).toFixed(1);
  }
  for (i = 0; i < 150; i++) {
    x = 170 + rnd() * 1390; y = 53 + rnd() * 571; a = rnd() * 6.28;
    d += 'M' + x.toFixed(1) + ' ' + y.toFixed(1);
    for (var j = 0; j < 6; j++) { a += (rnd() - .5) * 1.2; l = 8 + rnd() * 10; d += 'l' + (Math.cos(a) * l).toFixed(1) + ' ' + (Math.sin(a) * l).toFixed(1); }
  }
  add('path', { d: d, 'class': 'minor' });

  // Ponds
  d = '';
  for (i = 0; i < 90; i++) {
    x = 800 + rnd() * 560; y = 70 + rnd() * 540; l = 1.5 + rnd() * 4;
    d += 'M' + x.toFixed(1) + ' ' + y.toFixed(1) + 'l' + l.toFixed(1) + ' -1 1 ' + (l * .8).toFixed(1) + ' -' + l.toFixed(1) + ' 1z';
  }
  add('path', { d: d, 'class': 'lake' });

  // Water
  shape('B', 'lake', 'M-105 10L-40 10 0 98 70 160 130 195 165 200 165 160 185 145 190 205 330 215 400 235 500 242 640 215 720 212 800 250 900 300 1000 370 1080 470 1150 580 1195 650 1215 750 1215 870 1200 960 1215 990 1280 1060 1340 1090 1440 1130 1510 1205 1600 1275 1625 1345 1605 1415 1520 1545 1390 1740 1330 1740 1410 1625 1500 1515 1550 1425 1555 1325 1510 1285 1430 1240 1300 1170 1210 1095 1165 980 1150 870 1130 760 1085 620 1040 540 960 460 860 400 780 350 640 320 520 305 430 300 360 325 250 345 180 330 120 260 60 200 0 155 -55 60z');
  add('path', { d: 'M707 139l22-7 19 11-18 6zM838 147l30-16 20 5 30 12 20 9-15 2-30-12-25 4zM1022 282l4-8 7 20-1 12z', fill: '#eae9e4' });
  shape('B', 'lake', 'M790 500L830 510 835 540 865 590 830 620 805 690 860 660 900 612 940 640 960 690 985 720 960 740 970 765 830 760 740 690 722 640 735 560zM690 40L720 30 715 65 760 70 755 110 700 110zM1340 200L1370 205 1365 245 1320 240z');
  shape('E', 'lake', 'M520 270L540 260 565 360 550 370zM840 385L860 390 850 420 830 415zM890 470L910 470 925 520 905 560zM1100 600L1150 560 1230 570 1240 660 1180 670 1160 700 1090 640zM1100 735L1190 700 1160 760 1100 750zM900 680L990 660 950 700 890 700zM740 140L790 160 760 180z');
  shape('F', 'lake', 'M300 660L320 740 290 730zM350 700L450 760 440 790 400 770zM200 110L235 100 230 120z');
  shape('A', 'lake', 'M705 380L725 380 722 480 698 480zM860 200L875 200 872 212z');
  shape('D', 'lake', 'M20 765L95 765 80 785 30 780zM210 560L245 550 235 565z');
  [['C', 'M-380 440L-310 490 -210 555 -80 535 0 465 60 445 180 455 270 480 340 550 385 650 410 760 470 825 550 840 640 790 720 735 790 790 870 822 925 800 925 650 965 560 1040 520 1150 505 1345 520', 28],
   ['C', 'M1120 500L1345 520', 48],
   ['E', 'M810 680C860 600 960 590 990 620L985 650', 18],
   ['A', 'M375 130L378 252 495 368 700 355', 5], ['A', 'M575 235C680 250 730 290 730 350L705 400 715 500 760 545 820 520M720 640L745 580 820 630 880 620 875 550 840 515M720 640L745 700 760 780 850 830 880 870', 8],
   ['A', 'M0 540L20 600 60 640 70 690 40 800 85 870M270 10L310 35M1220 20L1330 100 1440 230M1380 600L1320 640', 5],
   ['D', 'M85 0L40 40 40 110 70 180 145 165 160 190 130 230 185 260 240 300 270 440 265 500 215 515 120 490 90 560 110 610 20 620M150 690L200 690 280 760 280 830 400 855M490 570L420 600 500 520M540 680L630 695 710 780 960 560', 4],
   ['D', 'M1025 60L990 160 980 250 900 245 870 280 900 370 890 480 910 495 960 465 1010 500 1060 550 1130 555 1200 545 1270 600 1320 670 1390 720 1415 790 1310 865', 11],
   ['E', 'M380 0L400 100 500 220 620 350M690 0L660 120 800 210 770 330M250 350L470 260M770 340L760 430 800 540 860 570M950 620L850 630M0 680L140 620 180 500', 4],
   ['F', 'M600 0L680 130 750 240 790 350', 10], ['F', 'M260 600L370 600 400 640 560 600 600 630 780 640 850 660 960 790 980 867M180 560L210 600 250 600M740 310L730 450', 7],
   ['F', 'M420 200L600 400M440 180L660 340M460 330L620 260M500 370L650 300M530 440L560 380M160 360L400 160M590 650L690 860', 3],
   ['B', 'M590 200L590 80 700 60M970 460L965 600 1070 740M395 350L395 700 420 870M180 540L60 700M1240 400L1440 160M1290 220L1320 60', 3],
   ['C', 'M0 160L120 50 300 60 430 170M350 260L430 400M1040 0L1040 60 1160 200 1345 260M420 240L650 180', 3],
   ['D', 'M320 285L480 240 640 320M350 640L450 650M1275 0L1400 150', 2],
   ['A', 'M1260 460L1440 480M820 690L870 780 940 870M1120 700L1200 710 1290 870', 2]
  ].forEach(function (s) { shape(s[0], 'river', s[1], s[2]); });

  // Secondary streets
  [['A', 'M350 135C330 230 350 250 430 350L480 390 580 390 610 430 620 540 710 620 700 870M510 215L610 370M560 160L620 190 700 210 770 370M620 190L600 10M740 130L740 370M850 10L850 60M770 350C790 260 820 200 900 140M930 365L1090 200 1190 145M1130 170L1240 295 1290 360 1440 355M920 365L1240 300M10 370L60 465 125 570 100 640 10 700M100 640L220 720M10 570L100 620 180 750 250 870M230 630L300 670 375 765 710 775M120 780L310 690M1280 350L1275 480 1255 540 1225 740 1195 870M845 385L890 500 950 560 960 700 945 760 950 810M945 748L1200 745 1440 810M840 230L870 300 830 340M640 10L750 130 740 160 870 150M1000 110L1190 140 1440 30M700 480L620 520M1330 180L1240 290', 6],
   ['B', 'M130 40L330 170 400 210 620 180 740 155 870 145M510 105L700 45 880 40M870 90L870 200 780 420 690 560 680 690M800 380L730 540 720 690M380 350L420 305 620 350 740 345 790 380 870 530 960 660 1030 760M0 380L150 390 380 325M530 440L730 540 M550 420L510 500M440 310L440 540 470 640 540 700 550 850M480 755L760 755M100 700L300 760 480 850M870 150L1040 200 1080 290 1040 410 1180 530 1440 500M1030 440L1140 520M1200 610L1320 540 1440 480M1100 850L1200 760 1330 700 1440 640M1210 750L1200 610M510 600L680 600M1060 200L1180 240 1440 260M0 180L60 260 120 380M0 770L100 650M950 870L1030 760 1100 850M380 70L560 180', 7],
   ['C', 'M0 660L180 450 350 260 660 90 740 20M10 500L180 465 300 480 370 580 500 650 600 690 680 640 710 460M550 560L570 600 780 605 920 560M590 90L650 250M690 300L680 420M700 640L750 740 840 730 920 540 1060 500 1345 350M680 80L1070 250 1200 320 1345 270M690 310L780 320 860 350 1060 380 1110 90 1150 20M450 60L850 150M0 260L60 320 250 270 350 260 450 400 430 450 360 500M300 340L370 390 380 440M260 90L350 120 480 210M1070 590L1000 690 940 740 915 870M1180 620L1230 620 1240 720 1330 800M70 470L110 530M0 160L180 230M440 400L560 560M190 520L300 480M150 700L60 600M180 750L430 860', 6],
   ['D', 'M240 0L330 100 480 220 560 320 630 380 M20 180L60 180 150 160 190 110 260 75M660 220L750 200 770 280 700 390M715 120L760 260M665 220L675 380M750 100L850 140 860 340M735 430L735 480 780 530 850 550 920 510 1010 495 1150 510 1180 480 1290 530 1340 620 1430 720M600 370L640 400 730 430 770 390 790 355 880 340 1060 295M640 410L600 460 540 680 390 867M560 440L480 580 410 620 400 680 340 730 300 780 200 810M375 330L390 400 375 490 350 600M260 380L290 500 270 540 210 560 200 590 10 600M210 590L260 680 340 720 440 790 500 867M280 490L370 500 500 500M960 530L1010 600 1000 680 1010 760 1050 867M1150 510L1150 550 1240 600 1310 720 1300 800 1180 830 1160 867M1015 630L1090 630 1150 600 1190 560M10 310L60 370 100 450M1190 0L1180 120 1130 160 1050 165 1030 0M1130 160L1090 280M1155 170L1190 250 1180 370 1150 430M1210 450L1430 425M940 310L960 380 1000 440 1000 490', 6],
   ['E', 'M40 250L80 430 120 510 190 600 410 765 530 770 530 850M190 600L500 380 580 310 760 190M300 0L350 100 350 180 410 250M0 415L130 390M230 625L160 560M510 315L560 310 480 380 620 510 590 570 620 610M760 0L760 60 1000 80 1000 300 1000 480 1000 640M860 230L1000 260 1200 245 1280 320 1440 340M1180 50L1230 220 1260 260 1300 280M870 340L940 420 940 490 820 480M1000 360L1140 370 1300 300M1070 370L1070 460 1040 490 1190 490 1230 570 1250 640M760 330L620 420M1000 300L800 200M1080 300L1085 360M720 740L760 650 830 590 850 550M1290 630L1260 720 1200 790 1190 867M610 610L540 740 510 850M1000 70L1180 160M1440 210L1380 290M90 700L150 740 160 867M200 100L130 160', 7],
   ['F', 'M0 180L100 60 180 110 240 190 M460 0L430 170 430 280M670 150L670 200 700 300 600 600 560 700 490 867M730 150L730 240 800 270 870 260 930 270 970 270 990 360 1100 460 1080 530M700 200L540 270 290 410 M790 490L750 570 750 640M800 510L790 570 850 620 950 710 900 750 820 760 600 800M1260 490L1170 830M1040 60L1080 130 1095 300 1130 310 1345 130M530 750L600 810 620 867M710 0L720 50 1020 40M270 500L340 480M330 350L300 410 380 410M0 100L140 130 150 190 170 270M320 820L460 850', 6]
  ].forEach(function (s) { shape(s[0], 'street', s[1], s[2] * 1); });

  shape('C', 'border', 'M245 10L250 75 300 75 320 130 390 150 415 270 430 340 500 380 610 335 640 450 700 510 870 530 970 490 1000 540 1050 580 1050 660 1100 690 1150 750 1145 850 1110 870');
  shape('F', 'border', 'M1120 0L1040 60 1055 90 1020 130 1020 210 1060 215 1040 270 970 275 980 330 900 315 850 355 790 355 740 380 740 430 650 430 680 460 650 500 650 580 670 600 670 650 600 660 560 620 440 610 340 580 230 570 180 680 175 850M980 320L1050 350 1110 315 1150 370 1220 395 1345 300');

  // Highways: casing first, then fill
  var hw = [['A', 'M12 268L190 333 240 330 310 365 440 380 500 393 660 375 750 370 810 390 880 378 960 410 1030 435 1130 460 1250 530 1340 585 1440 655', 11],
   ['B', 'M470 10L510 110 510 300 540 430 505 540 495 620 470 870M470 15L620 20 750 20 920 20 970 50 1080 190 1180 310 1260 400 1330 540 1360 620 1440 720M15 660L80 710 100 870M875 10L875 60', 13],
   ['C', 'M165 10L370 190 410 250 430 330 470 375 590 395 590 570 540 660 400 870M590 395L660 290 720 240 850 160 960 100 1080 10M650 230L690 300 600 395M0 670L100 830 150 867M670 10L680 50M1290 870L1345 845', 13],
   ['D', 'M12 432L100 434 140 420 250 360 330 323 520 315 660 299 860 305 1080 285 1200 258 1320 230 1440 232', 16],
   ['E', 'M0 235L180 245 390 290 505 312', 18], ['E', 'M460 30L455 110 520 200 580 290 760 550 800 590 940 645 1060 652 1240 665 1310 640 1440 490M660 420L460 570 260 740 110 867M265 740L262 867M105 10L180 220 220 370 270 375 340 430 450 570 520 625 650 690 870 800 920 850 1030 855M1005 650L1030 867M1060 650L1060 720 1155 867M1050 640L1075 650', 12],
   ['F', 'M0 530L90 420 240 235 350 110 410 0M120 0L180 40 360 95 440 135 570 235 690 330 730 370 790 470 880 540 950 710 1050 790 1200 850 1250 867M260 210L300 270 420 420 500 510 560 630 680 867M190 300L220 390 260 420 275 510 270 660 255 740 300 800 330 867M200 290L260 320 290 410 330 500 365 570 365 640 450 760 480 867M570 235L660 150 810 90 950 85 1140 35 1280 20 1345 0M760 420L820 510 880 545 1020 555 1260 485M250 200L270 250M340 90L370 110 350 120', 12]];
  hw.forEach(function (s) { shape(s[0], 'casing', s[1], s[2]); });
  hw.forEach(function (s) { shape(s[0], 'hwy', s[1], s[2] * .6); });

  // Labels: tile, centre x, centre y, width, size, text, class, rotation
  [['B', 367, 409, 185, 9, 'THỤY PHƯƠNG', 't'], ['B', 712, 402, 170, 9, 'PHÚ THƯỢNG', 't'], ['B', 560, 480, 110, 9, 'PHƯỜNG', 't'], ['B', 560, 507, 142, 9, 'XUÂN ĐỈNH', 't'],
   ['B', 867, 471, 126, 9, 'NHẬT TÂN', 't'], ['B', 968, 537, 98, 9, 'TỨ LIÊN', 't'], ['B', 1149, 636, 150, 9, 'NGỌC THỤY', 't'], ['B', 43, 552, 112, 9, 'TÂY TỰU', 't'],
   ['B', 32, 643, 88, 9.5, 'NHỔN', 'k'], ['B', 411, 816, 120, 9, 'MAI DỊCH', 't'], ['A', 1265, 747, 148, 9, 'KIM CHUNG', 't'],
   ['C', 534, 258, 142, 9, 'ĐÌNH BẢNG', 't'], ['C', 530, 309, 150, 10.5, 'BẮC NINH', 'p'], ['C', 532, 405, 110, 11, 'HÀ NỘI', 'p'], ['C', 533, 474, 130, 9, 'NINH HIỆP', 't'],
   ['C', 124, 648, 140, 9, 'VIỆT HƯNG', 't'], ['C', 240, 726, 180, 9, 'KHU ĐÔ THỊ', 'k'], ['C', 240, 755, 165, 9, 'VINHOMES', 'k'], ['C', 240, 782, 162, 9, 'RIVERSIDE', 'k'],
   ['C', 625, 76, 210, 13.5, 'Tx. Từ Sơn', 'town'], ['C', 1028, 265, 280, 14, 'Chùa Phật Tích', 'poi'], ['C', 896, 409, 338, 14, 'VSIP Bac Ninh Co.', 'poi'], ['C', 1274, 571, 130, 14, 'Chùa B', 'poi'],
   ['C', 1220, 808, 178, 14, 'Chùa Dâu', 'poi'], ['C', 1025, 500, 150, 10.5, 'BẮC NINH', 'p', 26], ['C', 978, 588, 110, 10.5, 'HÀ NỘI', 'p', 28], ['C', 718, 752, 160, 10.5, 'Sông Đuống', 'w', 3],
   ['D', 578, 71, 194, 14, 'Chùa Thầy', 'poi'], ['D', 1370, 336, 136, 9, 'AN KHÁNH', 't'], ['D', 1365, 710, 120, 10.5, 'Sông Đáy', 'w', 43], ['A', 755, 730, 125, 10.5, 'Sông Đáy', 'w', 80],
   ['B', 260, 188, 145, 10.5, 'Sông Hồng', 'w', 23], ['B', 1003, 622, 150, 10.5, 'Sông Hồng', 'w', 52], ['B', 793, 685, 125, 12, 'Hồ Tây', 'w', 54], ['B', 516, 245, 218, 10.5, 'Cầu Thăng Long', 'br', 90], ['A', 1366, 38, 66, 10.5, 'Hồng', 'w', 58],
   ['E', 146, 522, 145, 9, 'DƯƠNG NỘI', 't'], ['E', 394, 530, 132, 9, 'VẠN PHÚC', 't'], ['E', 361, 657, 186, 9, 'QUANG TRUNG', 't'], ['E', 571, 671, 118, 9, 'KHU ĐÔ', 'k'], ['E', 574, 699, 155, 9, 'THỊ XA LA', 'k'],
   ['E', 239, 868, 118, 9, 'PHÚ LÃM', 't'], ['E', 1026, 806, 120, 9, 'VĂN ĐIỂN', 't'], ['E', 1038, 294, 150, 9, 'BÁCH KHOA', 't'], ['E', 770, 291, 180, 9, 'KHU ĐÔ THỊ', 'k'], ['E', 770, 320, 183, 9, 'ROYAL CITY', 'k'],
   ['E', 1230, 369, 180, 9, 'KHU ĐÔ THỊ', 'k'], ['E', 1230, 398, 178, 9, 'TIMES CITY', 'k'], ['E', 557, 129, 208, 15, 'YÊN HOÀ', 'd'], ['E', 630, 237, 280, 15, 'TRUNG HOÀ', 'd'], ['E', 937, 71, 195, 19, 'Hà Nội', 'd'],
   ['E', 761, 183, 418, 14, 'Công Viên Thống Nhất', 'park'], ['E', 1367, 60, 368, 14, 'Nhà Hát Lớn Hà Nội', 'teal'], ['B', 776, 773, 252, 14, 'Lăng Chủ tịch', 'teal'], ['B', 789, 815, 226, 14, 'Hồ Chí Minh', 'teal'], ['B', 1254, 782, 288, 14, 'Chợ Đồng Xuân', 'shop'],
   ['F', 22, 381, 138, 9, 'THANH TRÌ', 't'], ['F', 228, 402, 118, 9, 'ĐÔNG DƯ', 't'], ['F', 432, 258, 172, 9, 'TT. TRÂU QUỲ', 't'], ['F', 661, 309, 135, 9, 'DƯƠNG XÁ', 't'], ['F', 868, 438, 198, 9, 'TT. NHƯ QUỲNH', 't'],
   ['F', 313, 553, 110, 11, 'HÀ NỘI', 'p'], ['F', 312, 632, 162, 11, 'HƯNG YÊN', 'p'], ['F', 381, 671, 180, 9, 'KHU ĐÔ THỊ', 'k'], ['F', 382, 702, 146, 9, 'ECOPARK', 'k'], ['F', 162, 580, 150, 10.5, 'Sông Hồng', 'w', -60]
  ].forEach(function (l) {
    var x = tiles[l[0]][0] + l[1] / 3, y = tiles[l[0]][1] + l[2] / 3;
    var a = { x: x, y: y + l[4] * .35, 'font-size': l[4], 'class': l[6], textLength: l[3] / 3 };
    if (l[7]) a.transform = 'rotate(' + l[7] + ' ' + x + ' ' + y + ')';
    add('text', a, l[5]);
  });

  // Road shields
  [['QL32', 256, 166], ['QL32', 521.5, 197.5], ['DT420', 224.5, 253.5], ['DT422', 579.5, 257.5], ['DT422', 428.5, 330.5], ['DT422B', 622, 314], ['QL5', 858, 56], ['DT70A', 657.5, 189.5], ['DT70A', 644.5, 218.5],
   ['QL32', 693.5, 296.5], ['CT20', 805, 256], ['DT70A', 673.5, 337.5], ['QL3', 1037, 124.5], ['AH14', 1021.5, 141], ['CT07', 1222, 108], ['DT179', 1321.5, 110.5], ['DT287', 1345.5, 99.5], ['DT276', 1520.5, 57.5],
   ['QL3', 1155, 188.5], ['QL1A', 1291.5, 266.5], ['AH14', 1131.5, 308], ['DT419', 267.5, 357.5], ['CT08', 430, 436], ['CT08', 242.5, 459], ['CT08', 618.5, 411], ['DT419', 377.5, 464.5], ['DT72', 554.5, 488.5], ['DT419', 499.5, 532.5],
   ['DT70', 707, 434.5], ['DT72', 686, 460.5], ['DT70A', 743.5, 470.5], ['AH13', 814.5, 509], ['CT20', 923.5, 536], ['CT20', 1097.5, 524], ['AH13', 700, 604], ['DT70A', 929.5, 609.5], ['QL1A', 982, 616.5], ['CT01', 997, 572],
   ['AH14', 1181.5, 350], ['QL17', 1440.5, 358.5], ['QL1A', 1207.5, 391.5], ['DT378', 1158.5, 414.5], ['DT179', 1339.5, 413.5], ['AH14', 1350, 453], ['QL1A', 1137, 479.5], ['QL5B', 1252, 471.5], ['DT379', 1213.5, 488.5], ['DT388', 1546.5, 492], ['DT179', 1266.5, 611]
  ].forEach(function (s) {
    var k = s[0].slice(0, 2), n = s[0].length, w = n === 3 ? 22 : n === 4 ? 28 : n === 5 ? 33 : 38, h = 10;
    var c = { QL: ['#3877c8', '#3877c8', '#fff'], DT: ['#3877c8', '#3877c8', '#fff'], CT: ['#fbda3c', '#e3bd28', '#5d5219'], AH: ['#fff', '#5f6368', '#5f6368'] }[k];
    var g = add('g', { 'class': 'sh' });
    add('rect', { x: s[1] - w / 2 + .5, y: s[2] - h / 2, width: w - 1, height: h, fill: c[0], stroke: c[1] }, '', g);
    add('text', { x: s[1], y: s[2] + 3, 'font-size': 8.6, textLength: w - 6, fill: c[2] }, s[0], g);
  });

  // Place pins
  function pin(x, y, color, glyph) {
    var g = add('g', { transform: 'translate(' + x + ' ' + y + ')' });
    add('path', { d: 'M0 17C-2 10-9.500 7-9.500-.5a9.500 9.500 0 0 1 19 0C9.500 7 2 10 0 17z', fill: color, stroke: '#fff', 'stroke-width': .8 }, '', g);
    add('path', { d: glyph, fill: 'none', stroke: '#fff', 'stroke-width': 1.6 }, '', g);
  }
  var wheel = 'M0-6V6M-6 0H6M-4.200-4.200 4.200 4.200M4.200-4.200-4.200 4.200M-4 0a4 4 0 1 0 8 0 4 4 0 1 0-8 0';
  pin(402.5, 355, '#78909c', wheel); pin(1512.5, 134, '#78909c', wheel); pin(1500.500, 236, '#78909c', wheel); pin(1560, 315, '#78909c', wheel);
  pin(1339.5, 182, '#78909c', 'M-1-.500a1 1 0 1 0 2 0 1 1 0 1 0-2 0M-2.500-.500a2.500 2.500 0 1 0 5 0 2.500 2.500 0 1 0-5 0');
  pin(1021.5, 350, '#12b5cb', 'M-1 3V-4L4-5V1M-4 3h3M1 1h3');
  pin(976.5, 391.5, '#34a853', 'M0 6V-5M-4 3H4M-3 0H3M-2-3H2');
  pin(997.5, 307, '#4285f4', 'M-6-4h2L-2 2H4L5-3H-3M-1.500 4.500h1M3 4.500h1');
  pin(953.5, 309, '#12b5cb', 'M-4 4.500H4M-2.500 4V-2h5v6M-4-2V-5M0-2V-5M4-2V-5M-4-2.500H4');

  // Vehicle routes
  add('path', { d: 'M897 330L908 335 933 337 933 345 955 344M894 350L933 345 957 348 952 358M897 330L894 350', fill: 'none', stroke: '#f9408f', 'stroke-opacity': .82, 'stroke-width': 4 });
  add('path', { d: 'M896 327L872 328 847 368 857 380 866 397 880 409 895 420 900 428 907 435 930 441 970 451 973 455 972 497 985 497 987 510 998 518 1008 531 1010 532 1013 527 1028 521 1044 522 1046 520 1053 557 1036 558 1000 553 953 551 930 543 906 531 895 521 833 431 865 399 888 363 896 327M1028 523V513', fill: 'none', stroke: '#5059d8', 'stroke-opacity': .78, 'stroke-width': 4, 'stroke-linejoin': 'round' });

  // Depot marker and numbered stops
  add('path', { d: 'M866 296L883 281 901 296 898 298V311H890L884 325 877 311H868V298z', fill: '#c0392b' });
  add('path', { d: 'M873 295L883 286 894 295V306H873z', fill: '#fff' });
  add('path', { d: 'M877 296.500h11M883.500 291.500l5 5-5 5', fill: 'none', stroke: '#c0392b', 'stroke-width': 2 });
  function stop(x, y, c) {
    add('path', { d: 'M' + (x - 3) + ' ' + (y + 12) + 'h6l-3 13z', fill: c });
    add('circle', { cx: x, cy: y, r: 12, fill: '#fff', stroke: c, 'stroke-width': 2.6 });
    add('text', { x: x, y: y + 4, 'font-size': 11, 'font-weight': 700, fill: c }, '1');
  }
  stop(952, 332, '#f9408f'); stop(1031, 486, '#4a56db');
})();
```
